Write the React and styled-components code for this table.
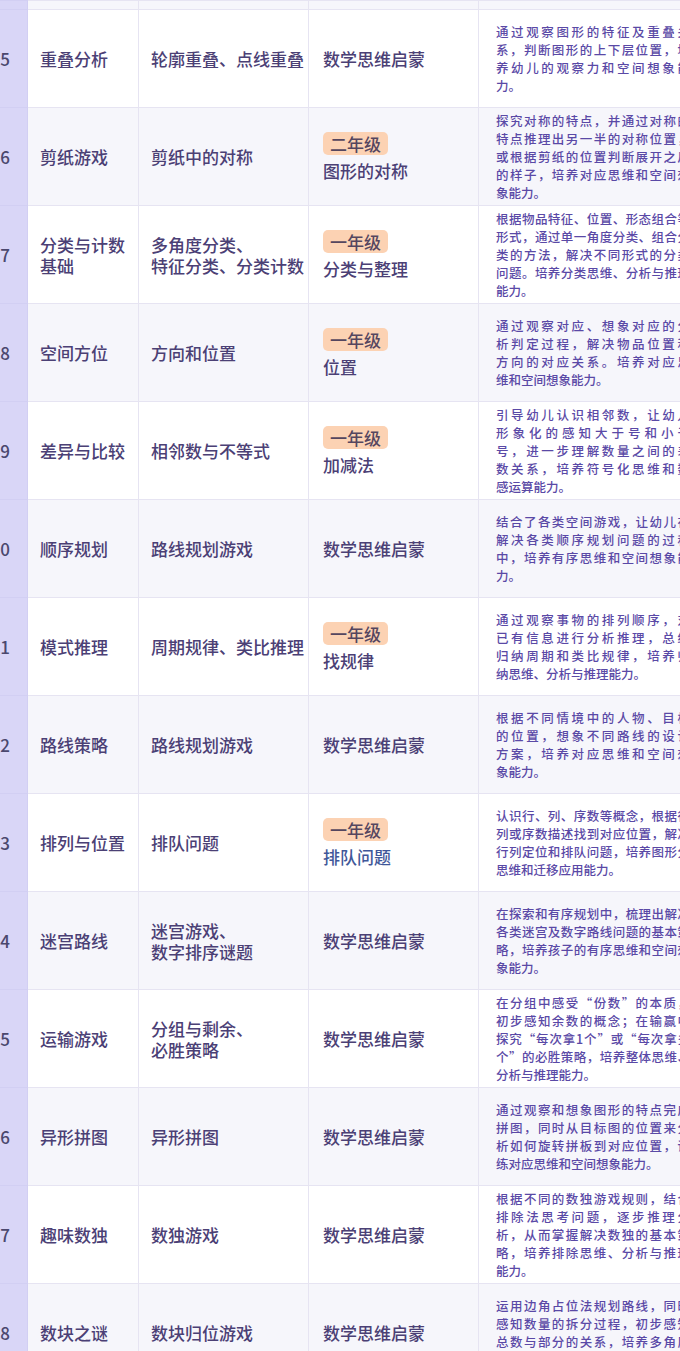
import React from 'react'
import styled, { createGlobalStyle } from 'styled-components'

const GlobalStyle = createGlobalStyle`
  body {
    margin: 0;
    background: #ffffff;
    font-family: "Noto Sans CJK SC", "Noto Sans", sans-serif;
  }
`

const Viewport = styled('div')`
  width: 680px;
  height: 1351px;
  overflow: hidden;
  background: #ffffff;
`

const Table = styled('table')`
  /* the table is scrolled a little to the right, so the index column is cut */
  margin-left: -23px;
  width: 729px;
  border-collapse: collapse;
  table-layout: fixed;
`

const Row = styled('tr')`
  height: ${({ $h }) => $h}px;
  background: ${({ $alt }) => ($alt ? '#f6f6fb' : '#ffffff')};
`

const Cell = styled('td')`
  box-sizing: border-box;
  padding: 0 12px;
  border: 1px solid #e6e4f2;
  vertical-align: middle;
  font-size: 17px;
  font-weight: 500;
  line-height: 21px;
  color: #4b4075;
`

const NumCell = styled(Cell)`
  padding: 0 17px 0 0;
  text-align: right;
  background: #d9d6f7;
  border-color: #d2cff3;
  color: #4b486e;
`

const TopicCell = styled(Cell)`
  padding: 0 14px;
`

const DescCell = styled(Cell)`
  padding: 0 17px;
  font-size: 12.5px;
  line-height: 18px;
  color: #5a49a6;
`

const Line = styled('div')`
  white-space: nowrap;
`

const DescLine = styled('div')`
  width: 194px;
  text-align: justify;
  text-align-last: ${({ $last }) => ($last ? 'left' : 'justify')};
`

const Grade = styled('div')`
  display: flex;
  flex-direction: column;
  align-items: flex-start;
  gap: 5px;
`

const Badge = styled('span')`
  display: inline-block;
  height: 23px;
  padding: 0 7px;
  border-radius: 5px;
  background: #fcd2b3;
  color: #55465f;
  line-height: 23px;
`

const Topic = styled('span')`
  line-height: 22px;
  color: ${({ $blue }) => ($blue ? '#3f5799' : '#4b4075')};
`

const rows = [
  {
    n: 5,
    name: '重叠分析',
    skill: ['轮廓重叠、点线重叠'],
    topic: '数学思维启蒙',
    desc: ['通过观察图形的特征及重叠关', '系，判断图形的上下层位置，培', '养幼儿的观察力和空间想象能', '力。'],
  },
  {
    n: 6,
    name: '剪纸游戏',
    skill: ['剪纸中的对称'],
    grade: '二年级',
    topic: '图形的对称',
    desc: ['探究对称的特点，并通过对称的', '特点推理出另一半的对称位置，', '或根据剪纸的位置判断展开之后', '的样子，培养对应思维和空间想', '象能力。'],
  },
  {
    n: 7,
    name: '分类与计数基础',
    skill: ['多角度分类、', '特征分类、分类计数'],
    grade: '一年级',
    topic: '分类与整理',
    desc: ['根据物品特征、位置、形态组合等', '形式，通过单一角度分类、组合分', '类的方法，解决不同形式的分类', '问题。培养分类思维、分析与推理', '能力。'],
  },
  {
    n: 8,
    name: '空间方位',
    skill: ['方向和位置'],
    grade: '一年级',
    topic: '位置',
    desc: ['通过观察对应、想象对应的分', '析判定过程，解决物品位置和', '方向的对应关系。培养对应思', '维和空间想象能力。'],
  },
  {
    n: 9,
    name: '差异与比较',
    skill: ['相邻数与不等式'],
    grade: '一年级',
    topic: '加减法',
    desc: ['引导幼儿认识相邻数，让幼儿', '形象化的感知大于号和小于', '号，进一步理解数量之间的差', '数关系，培养符号化思维和数', '感运算能力。'],
  },
  {
    n: 10,
    name: '顺序规划',
    skill: ['路线规划游戏'],
    topic: '数学思维启蒙',
    desc: ['结合了各类空间游戏，让幼儿在', '解决各类顺序规划问题的过程', '中，培养有序思维和空间想象能', '力。'],
  },
  {
    n: 11,
    name: '模式推理',
    skill: ['周期规律、类比推理'],
    grade: '一年级',
    topic: '找规律',
    desc: ['通过观察事物的排列顺序，对', '已有信息进行分析推理，总结', '归纳周期和类比规律，培养归', '纳思维、分析与推理能力。'],
  },
  {
    n: 12,
    name: '路线策略',
    skill: ['路线规划游戏'],
    topic: '数学思维启蒙',
    desc: ['根据不同情境中的人物、目标', '的位置，想象不同路线的设计', '方案，培养对应思维和空间想', '象能力。'],
  },
  {
    n: 13,
    name: '排列与位置',
    skill: ['排队问题'],
    grade: '一年级',
    topic: '排队问题',
    blue: true,
    desc: ['认识行、列、序数等概念，根据行', '列或序数描述找到对应位置，解决', '行列定位和排队问题，培养图形分', '思维和迁移应用能力。'],
  },
  {
    n: 14,
    name: '迷宫路线',
    skill: ['迷宫游戏、', '数字排序谜题'],
    topic: '数学思维启蒙',
    desc: ['在探索和有序规划中，梳理出解决', '各类迷宫及数字路线问题的基本策', '略，培养孩子的有序思维和空间想', '象能力。'],
  },
  {
    n: 15,
    name: '运输游戏',
    skill: ['分组与剩余、', '必胜策略'],
    topic: '数学思维启蒙',
    desc: ['在分组中感受“份数”的本质，', '初步感知余数的概念；在输赢中', '探究“每次拿1个”或“每次拿多', '个”的必胜策略，培养整体思维、', '分析与推理能力。'],
  },
  {
    n: 16,
    name: '异形拼图',
    skill: ['异形拼图'],
    topic: '数学思维启蒙',
    desc: ['通过观察和想象图形的特点完成', '拼图，同时从目标图的位置来分', '析如何旋转拼板到对应位置，训', '练对应思维和空间想象能力。'],
  },
  {
    n: 17,
    name: '趣味数独',
    skill: ['数独游戏'],
    topic: '数学思维启蒙',
    desc: ['根据不同的数独游戏规则，结合', '排除法思考问题，逐步推理分', '析，从而掌握解决数独的基本策', '略，培养排除思维、分析与推理', '能力。'],
  },
  {
    n: 18,
    name: '数块之谜',
    skill: ['数块归位游戏'],
    topic: '数学思维启蒙',
    desc: ['运用边角占位法规划路线，同时', '感知数量的拆分过程，初步感知', '总数与部分的关系，培养多角度', '思考能力。'],
  },
]

const App = () => {
  return (
    <Viewport>
      <GlobalStyle />
      <Table>
        <colgroup>
          <col style={{ width: 50 }} />
          <col style={{ width: 111 }} />
          <col style={{ width: 170 }} />
          <col style={{ width: 170 }} />
          <col style={{ width: 228 }} />
        </colgroup>
        <tbody>
          {/* bottom of the row above, scrolled out of view */}
          <Row $h={9} $alt>
            <NumCell />
            <Cell />
            <Cell />
            <Cell />
            <Cell />
          </Row>
          {rows.map((row, index) => (
            <Row key={row.n} $h={98} $alt={index % 2 === 1}>
              <NumCell>{row.n}</NumCell>
              <Cell>{row.name}</Cell>
              <Cell>
                {row.skill.map((s) => (
                  <Line key={s}>{s}</Line>
                ))}
              </Cell>
              <TopicCell>
                {row.grade ? (
                  <Grade>
                    <Badge>{row.grade}</Badge>
                    <Topic $blue={row.blue}>{row.topic}</Topic>
                  </Grade>
                ) : (
                  row.topic
                )}
              </TopicCell>
              <DescCell>
                {row.desc.map((d, i) => (
                  <DescLine key={i} $last={i === row.desc.length - 1}>
                    {d}
                  </DescLine>
                ))}
              </DescCell>
            </Row>
          ))}
        </tbody>
      </Table>
    </Viewport>
  )
}

export default App
